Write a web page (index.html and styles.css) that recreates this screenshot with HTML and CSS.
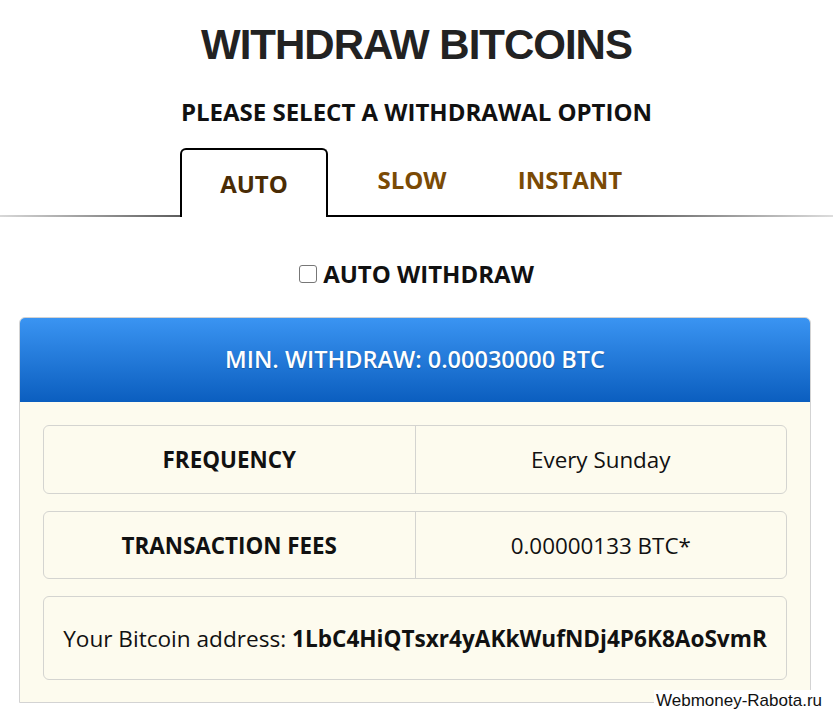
FILE: index.html
```html
<!DOCTYPE html>
<html>
<head>
<meta charset="utf-8">
<link rel="stylesheet" href="styles.css">
</head>
<body>
<div class="page">
  <h1 class="title">WITHDRAW BITCOINS</h1>
  <h2 class="subtitle">PLEASE SELECT A WITHDRAWAL OPTION</h2>
  <div class="tabs">
    <div class="tab active">AUTO</div>
    <div class="tab">SLOW</div>
    <div class="tab">INSTANT</div>
  </div>
  <div class="auto-row">
    <span class="check"></span>
    <span class="auto-label">AUTO WITHDRAW</span>
  </div>
  <div class="panel">
    <div class="panel-head">MIN. WITHDRAW: 0.00030000 BTC</div>
    <div class="panel-body">
      <div class="row r1">
        <div class="cell key">FREQUENCY</div>
        <div class="cell val">Every Sunday</div>
      </div>
      <div class="row r2">
        <div class="cell key">TRANSACTION FEES</div>
        <div class="cell val num">0.00000133 BTC*</div>
      </div>
      <div class="row addr">
        <div class="cell">Your Bitcoin address: <b>1LbC4HiQTsxr4yAKkWufNDj4P6K8AoSvmR</b></div>
      </div>
    </div>
  </div>
  <div class="watermark">Webmoney-Rabota.ru</div>
</div>
</body>
</html>
```

FILE: styles.css
```css
* { box-sizing: border-box; }
html, body { margin: 0; padding: 0; background: #fff; }
.page {
  position: relative;
  width: 833px;
  height: 717px;
  overflow: hidden;
  font-family: "Open Sans", sans-serif;
  color: #111;
}
.title {
  margin: 0;
  padding-top: 20px;
  height: 86px;
  text-align: center;
  font-family: "Liberation Sans", Arial, sans-serif;
  font-weight: bold;
  font-size: 42px;
  letter-spacing: -1px;
  line-height: 50px;
  color: #222;
}
.subtitle {
  margin: 0;
  height: 62px;
  text-align: center;
  font-size: 24px;
  line-height: 52px;
  font-weight: bold;
  color: #111;
}
.tabs {
  display: flex;
  justify-content: center;
  gap: 10px;
  padding-right: 9px;
  height: 70px;
  position: relative;
  background: linear-gradient(to right, #d8d8d8 0%, #666 20%, #000 40%, #000 58%, #ddd 100%) no-repeat;
  background-size: 100% 2px;
  background-position: 0 67px;
}
.tab {
  width: 148px;
  height: 68px;
  text-align: center;
  font-size: 24px;
  font-weight: bold;
  line-height: 64px;
  color: #7a4a05;
}
.tab.active {
  border: 2px solid #000;
  border-bottom: none;
  border-radius: 6px 6px 0 0;
  background: #fff;
  color: #4a2c05;
  line-height: 68px;
  height: 69px;
}
.auto-row {
  display: flex;
  justify-content: center;
  align-items: center;
  gap: 6px;
  height: 99px;
  padding-top: 12px;
}
.check {
  width: 18px;
  height: 18px;
  border: 1.5px solid #777;
  border-radius: 3px;
  background: #fff;
}
.auto-label {
  font-size: 24px;
  font-weight: bold;
  color: #111;
}
.panel {
  margin: 0 22px 0 19px;
  border: 1px solid #d3d3d3;
  border-radius: 6px 6px 0 0;
  overflow: hidden;
  background: #fdfbee;
}
.panel-head {
  height: 84px;
  background: linear-gradient(to bottom, #3a94f2, #0b5ebf);
  color: #fff;
  text-align: center;
  font-size: 23.5px;
  font-weight: 600;
  line-height: 82px;
  text-shadow: 0 1px 1px rgba(0,0,0,0.25);
}
.panel-body {
  display: flex;
  flex-direction: column;
  gap: 17px;
  padding: 23px 23px 22px 23px;
}
.row {
  display: flex;
  height: 69px;
  border: 1px solid #d4d4d0;
  border-radius: 6px;
}
.row.r2 { height: 68px; }
.cell {
  flex: 1;
  display: flex;
  align-items: center;
  justify-content: center;
  font-size: 22.4px;
  color: #111;
}
.cell.key { font-weight: bold; border-right: 1px solid #d4d4d0; }
.row.addr { height: 84px; }
.row.addr .cell { white-space: pre; font-size: 22.6px; }
.row.addr b { font-weight: bold; }
.watermark {
  position: absolute;
  right: 11px;
  bottom: 5px;
  padding-left: 2px;
  background: #fff;
  font-family: "Liberation Sans", Arial, sans-serif;
  font-size: 17px;
  line-height: 22px;
  color: #111;
}
```
